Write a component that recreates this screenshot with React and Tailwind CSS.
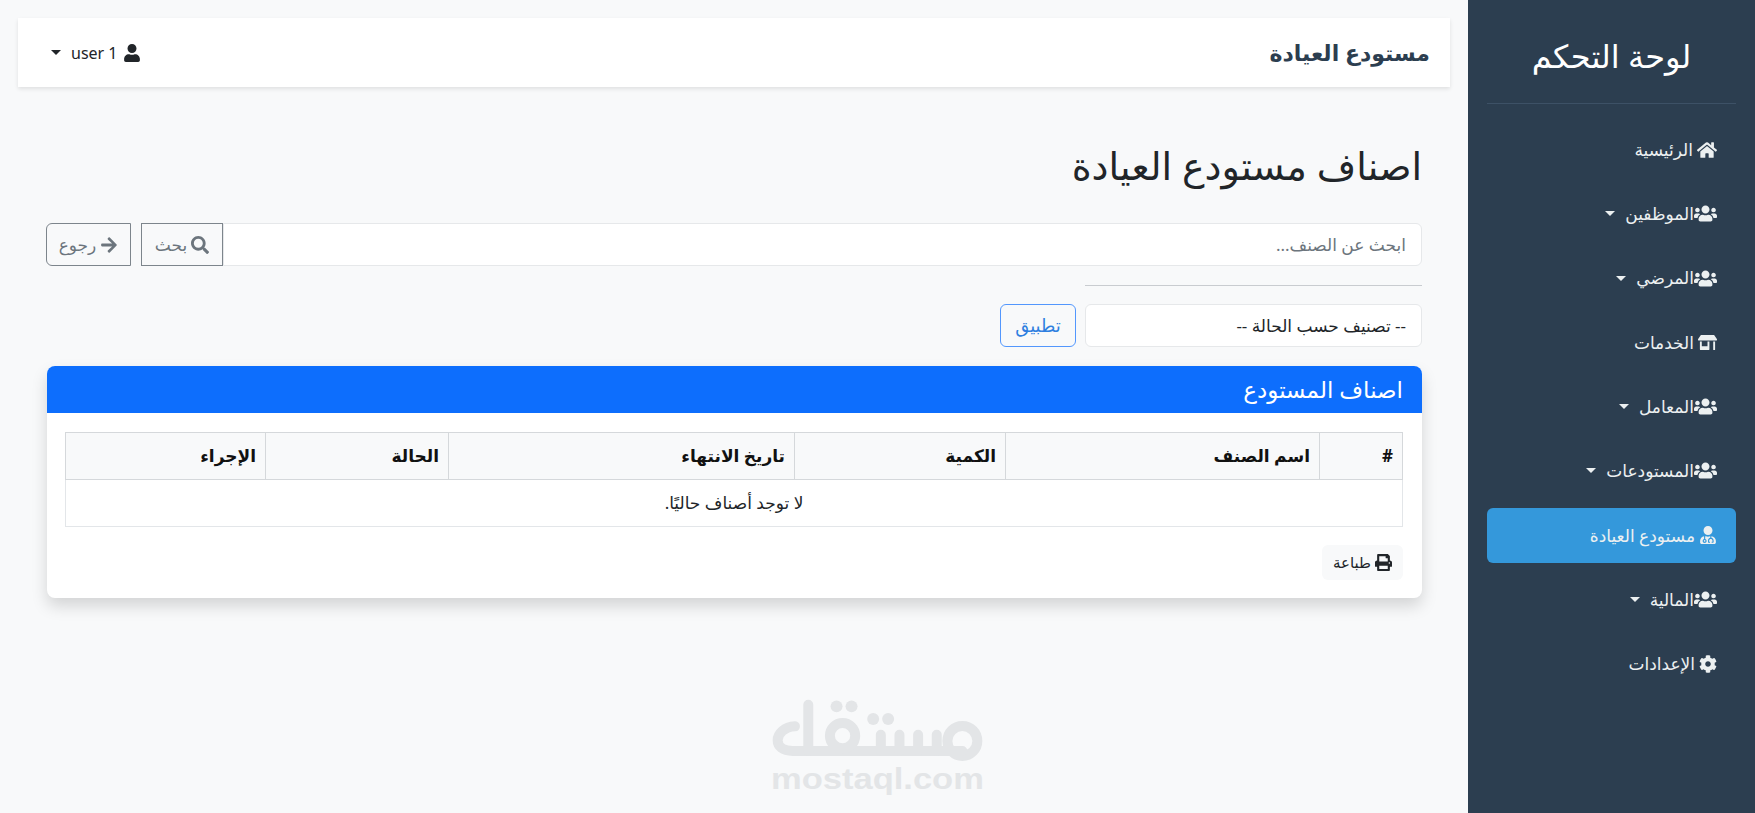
import React from 'react';
import {
  FaHome,
  FaUsers,
  FaStoreAlt,
  FaUserMd,
  FaCog,
  FaUser,
  FaSearch,
  FaArrowRight,
  FaPrint,
} from 'react-icons/fa';

const navItems = [
  { label: 'الرئيسية', icon: FaHome, size: 'text-[20px]' },
  { label: 'الموظفين', icon: FaUsers, size: 'text-[23px]', caret: true },
  { label: 'المرضي', icon: FaUsers, size: 'text-[23px]', caret: true },
  { label: 'الخدمات', icon: FaStoreAlt, size: 'text-[19px]' },
  { label: 'المعامل', icon: FaUsers, size: 'text-[23px]', caret: true },
  { label: 'المستودعات', icon: FaUsers, size: 'text-[23px]', caret: true },
  { label: 'مستودع العيادة', icon: FaUserMd, size: 'text-[18px]', active: true },
  { label: 'المالية', icon: FaUsers, size: 'text-[23px]', caret: true },
  { label: 'الإعدادات', icon: FaCog, size: 'text-[18px]' },
];

const columns = [
  { label: '#', width: 'w-[83px]' },
  { label: 'اسم الصنف', width: 'w-[314px]' },
  { label: 'الكمية', width: 'w-[211px]' },
  { label: 'تاريخ الانتهاء', width: 'w-[346px]' },
  { label: 'الحالة', width: 'w-[183px]' },
  { label: 'الإجراء', width: 'w-[200px]' },
];

const Caret = ({ className }) => (
  <span className={`inline-block w-0 h-0 border-x-[5px] border-x-transparent border-t-[5px] ${className}`} />
);

const Sidebar = () => (
  <aside className="w-[287px] shrink-0 bg-[#2c3e50] text-[#ecf0f1] px-[19px] pt-5">
    <h1 className="h-[84px] pb-[12px] flex items-center justify-center text-[32px] text-white border-b border-[#3d5166]">
      لوحة التحكم
    </h1>
    <nav className="mt-[18px] flex flex-col gap-[9.3px]">
      {navItems.map((item) => (
        <a
          key={item.label}
          className={`h-[55px] px-[19px] rounded-md flex items-center text-[17px] ${item.active ? 'bg-[#3498db]' : ''}`}
        >
          <item.icon className={`${item.size} shrink-0`} />
          <span className={item.caret ? '' : 'mr-1'}>{item.label}</span>
          {item.caret && <Caret className="mr-2.5 border-t-[#ecf0f1]" />}
        </a>
      ))}
    </nav>
  </aside>
);

const Topbar = () => (
  <header className="h-[69px] bg-white shadow-[0_2px_4px_rgba(0,0,0,0.1)] flex items-center justify-between pr-5 pl-[33px]">
    <span className="text-[22px] font-bold text-[#2c3e50]">مستودع العيادة</span>
    <div className="flex items-center text-[#212529] text-[16px]">
      <FaUser className="text-[18px]" />
      <span dir="ltr" className="mr-[5px]">user 1</span>
      <Caret className="mr-[10px] border-t-[#212529]" />
    </div>
  </header>
);

const Watermark = () => (
  <div className="absolute bottom-[19px] left-[772px] w-[211px] flex flex-col items-center text-[#e3e5e7] pointer-events-none">
    <svg viewBox="150 55 640 195" className="w-[213px] h-[65px] mb-[2px]" fill="none" stroke="#e3e5e7" strokeWidth="30" strokeLinecap="round">
      <circle cx="725" cy="184" r="45" />
      <path d="M725 214H215C185 214 170 200 170 182C170 162 190 142 222 140" />
      <path d="M262 75V214M480 165V214M536 165V214M592 165V214M648 165V214" />
      <circle cx="365" cy="168" r="38" />
      <g fill="#e3e5e7" stroke="none">
        <circle cx="347" cy="80" r="18" />
        <circle cx="392" cy="80" r="18" />
        <circle cx="457" cy="118" r="18" />
        <circle cx="502" cy="118" r="18" />
      </g>
    </svg>
    <span dir="ltr" className="font-['Liberation_Sans',sans-serif] font-bold text-[29px] leading-[29px] whitespace-nowrap scale-x-[1.19]">
      mostaql.com
    </span>
  </div>
);

const App = () => {
  return (
    <div dir="rtl" className="relative flex h-[813px] overflow-hidden bg-[#f8f9fa] font-['Noto_Sans','DejaVu_Sans',sans-serif]">
      <Sidebar />
      <main className="flex-1 pt-[18px] pr-[18px] pl-[18px]">
        <Topbar />
        <div className="pr-7 pl-[29px] pt-[55px]">
          <h2 className="h-[47px] text-[38px] leading-[47px] text-[#212529]">اصناف مستودع العيادة</h2>
          <div className="mt-[34px] flex h-[43px]">
            <input
              placeholder="ابحث عن الصنف..."
              className="flex-1 bg-white border border-[#e6e8ea] rounded-r-md px-[15px] text-[17px] placeholder:text-[#6c757d] outline-none"
            />
            <button className="w-[82px] flex items-center justify-center gap-1 border border-[#7d858c] text-[#6c757d] text-[17px]">
              <FaSearch className="text-[18px]" />
              بحث
            </button>
            <button className="w-[85px] -ml-px mr-[10px] flex items-center justify-center gap-1 border border-[#7d858c] rounded-l-md text-[#6c757d] text-[17px]">
              <FaArrowRight className="text-[18px]" />
              رجوع
            </button>
          </div>
          <hr className="mt-[19px] w-[337px] border-[#c9ccd0]" />
          <div className="mt-[18px] flex gap-[9px] h-[43px]">
            <select className="w-[337px] bg-white border border-[#e6e8ea] rounded-md px-[15px] text-[17px] text-[#212529] appearance-none outline-none">
              <option>-- تصنيف حسب الحالة --</option>
            </select>
            <button className="w-[76px] border border-[#0d6efd]/70 rounded-md text-[#2f7fe0] text-[18px]">تطبيق</button>
          </div>
          <section className="mt-[19px] h-[232px] bg-white rounded-lg shadow-[0_8px_16px_rgba(0,0,0,0.15)] overflow-hidden">
            <div className="h-[47px] bg-[#0d6efd] text-white text-[23px] flex items-center px-[19px]">اصناف المستودع</div>
            <div className="pr-[19px] pl-[18px] pt-[19px]">
              <table className="w-full table-fixed border-collapse text-[17px] text-[#212529]">
                <colgroup>
                  {columns.map((col) => (
                    <col key={col.label} className={col.width} />
                  ))}
                </colgroup>
                <thead>
                  <tr className="h-[47px] bg-[#f8f9fa]">
                    {columns.map((col) => (
                      <th key={col.label} className="border border-[#d5d8db] px-[9px] text-right font-bold text-[#111]">
                        {col.label}
                      </th>
                    ))}
                  </tr>
                </thead>
                <tbody>
                  <tr className="h-[47px]">
                    <td colSpan={6} className="border border-[#e3e6e9] text-center">لا توجد أصناف حاليًا.</td>
                  </tr>
                </tbody>
              </table>
              <button className="mt-[18px] w-[81px] h-[35px] bg-[#f8f9fa] rounded-md flex items-center justify-center gap-1 text-[15px] text-[#212529]">
                <FaPrint className="text-[17px]" />
                طباعة
              </button>
            </div>
          </section>
        </div>
      </main>
      <Watermark />
    </div>
  );
};

export default App;
